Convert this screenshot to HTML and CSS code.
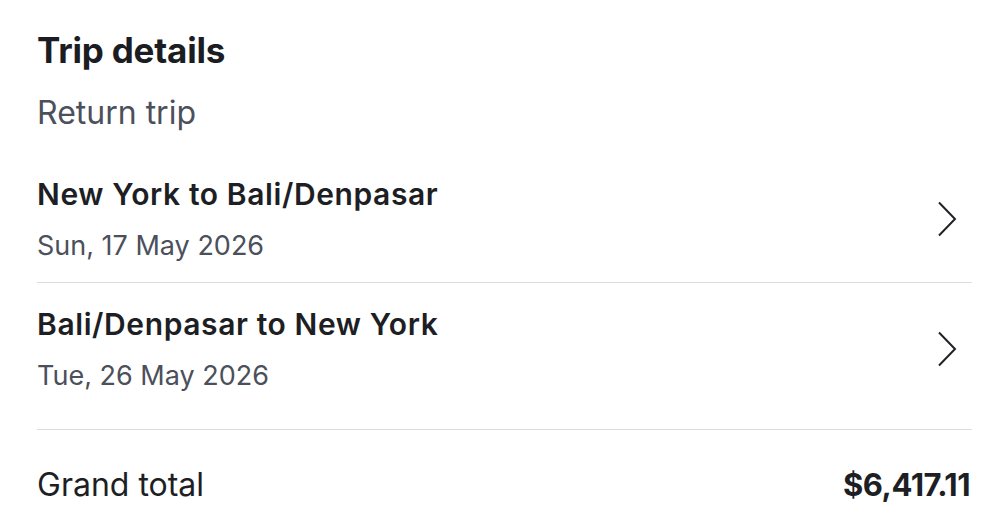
FILE: index.html
```html
<!DOCTYPE html>
<html lang="en">
<head>
<meta charset="utf-8">
<title>Trip details</title>
<link rel="stylesheet" href="styles.css">
</head>
<body>
<main class="card">
  <h1 class="title">Trip details</h1>
  <p class="subtitle">Return trip</p>
  <ul class="legs">
    <li class="leg leg-first">
      <div class="leg-info">
        <div class="leg-route">New York to Bali/Denpasar</div>
        <div class="leg-date">Sun, 17 May 2026</div>
      </div>
      <svg class="chev" width="20" height="36" viewBox="0 0 20 36" aria-hidden="true"><path d="M2 1.5 L18 18 L2 34.5" fill="none" stroke="#1f2127" stroke-width="2"/></svg>
    </li>
    <li class="leg leg-second">
      <div class="leg-info">
        <div class="leg-route">Bali/Denpasar to New York</div>
        <div class="leg-date">Tue, 26 May 2026</div>
      </div>
      <svg class="chev" width="20" height="36" viewBox="0 0 20 36" aria-hidden="true"><path d="M2 1.5 L18 18 L2 34.5" fill="none" stroke="#1f2127" stroke-width="2"/></svg>
    </li>
  </ul>
  <div class="total">
    <span class="total-label">Grand total</span>
    <span class="total-value">$6,417.11</span>
  </div>
</main>
</body>
</html>
```
FILE: styles.css
```css
* { box-sizing: border-box; }
html, body { margin: 0; padding: 0; background: #ffffff; }
body {
  font-family: Inter, "Noto Sans", "Liberation Sans", sans-serif;
  color: #1d1f25;
}
.card {
  width: 935px;
  margin-left: 37px;
  padding-top: 30px;
}
.title {
  margin: 0;
  font-size: 35px;
  line-height: 40px;
  font-weight: 700;
  letter-spacing: -0.2px;
  color: #1b1d23;
}
.subtitle {
  margin: 24px 0 0;
  font-size: 32px;
  line-height: 38px;
  font-weight: 400;
  color: #4b505b;
}
.legs {
  list-style: none;
  margin: 44px 0 0;
  padding: 0;
}
.leg {
  display: flex;
  align-items: center;
  justify-content: space-between;
  border-bottom: 1px solid #dcdcdc;
}
.leg-first { padding: 0 0 20px; }
.leg-second { padding: 23px 0 37px; }
.leg-info { display: flex; flex-direction: column; gap: 18px; }
.leg-route {
  font-size: 30px;
  line-height: 36px;
  font-weight: 600;
  letter-spacing: 0.6px;
  color: #1d1f25;
}
.leg-date {
  font-size: 27px;
  line-height: 32px;
  font-weight: 400;
  color: #4b505b;
}
.chev { margin-right: 15px; flex: none; }
.total {
  display: flex;
  justify-content: space-between;
  align-items: baseline;
  margin-top: 36px;
}
.total-label {
  font-size: 32px;
  line-height: 38px;
  font-weight: 400;
  color: #1d1f25;
}
.total-value {
  font-size: 31px;
  line-height: 38px;
  font-weight: 700;
  letter-spacing: -0.5px;
  margin-right: 2px;
  color: #1d1f25;
}
```
